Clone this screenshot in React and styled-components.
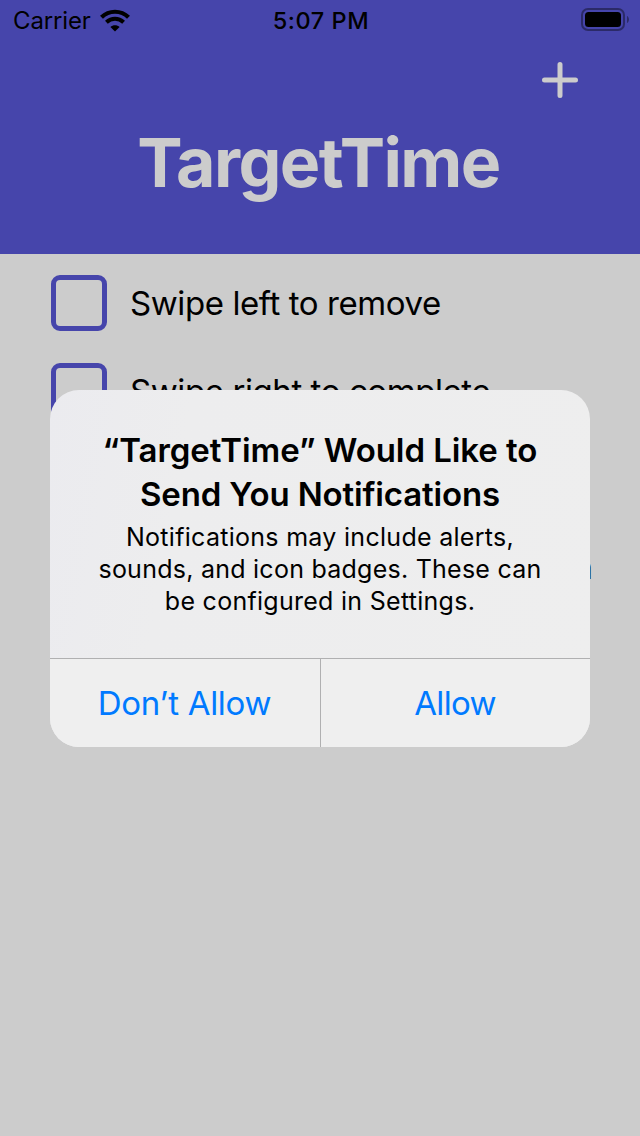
import React from "react";
import styled, { createGlobalStyle } from "styled-components";

const GlobalStyle = createGlobalStyle`
  * { box-sizing: border-box; }
  body {
    margin: 0;
    background: #cccccc;
    color: #000;
    font-family: Inter, "Liberation Sans", sans-serif;
  }
`;

const Screen = styled.div`
  position: relative;
  width: 640px;
  height: 1136px;
  overflow: hidden;
  background: #cccccc;
`;

const Header = styled.header`
  height: 254px;
  background: #4645ab;
  display: flex;
  flex-direction: column;
`;

const StatusBar = styled.div`
  height: 40px;
  display: grid;
  grid-template-columns: 1fr auto 1fr;
  grid-template-rows: 40px;
  align-items: center;
  padding: 0 11px 0 13px;
`;

const Carrier = styled.div`
  display: flex;
  align-items: center;
  gap: 9px;
  height: 40px;
  font-size: 24px;
  line-height: 38px;
  letter-spacing: -0.15px;
  padding-top: 2px;
`;

const WifiIcon = styled.svg`
  display: block;
  margin-bottom: 2px;
`;

const Clock = styled.div`
  height: 40px;
  font-size: 23.5px;
  font-weight: 500;
  line-height: 38px;
  letter-spacing: 0.55px;
  padding-top: 2px;
`;

const BatteryIcon = styled.svg`
  display: block;
  justify-self: end;
`;

const Toolbar = styled.div`
  height: 80px;
  display: flex;
  justify-content: flex-end;
  align-items: center;
  padding-right: 60px;
`;

const AddButton = styled.button`
  width: 40px;
  height: 40px;
  padding: 0;
  border: 0;
  background: none;
  svg { display: block; }
`;

const Title = styled.h1`
  margin: 0;
  padding-right: 3px;
  font-size: 68px;
  line-height: 84px;
  font-weight: 700;
  letter-spacing: -1.6px;
  text-align: center;
  color: #cccccc;
`;

const TaskList = styled.ul`
  list-style: none;
  margin: 0;
  padding: 5px 47.5px 0 51px;
`;

const TaskRow = styled.li`
  height: 88px;
  display: flex;
  align-items: center;
  gap: 23px;
`;

const Checkbox = styled.span`
  flex: none;
  width: 56px;
  height: 56px;
  border: 5px solid #4645ab;
  border-radius: 9px;
`;

const TaskLabel = styled.span`
  flex: 1;
  font-size: 33px;
  line-height: 44px;
  letter-spacing: -0.42px;
  text-align: ${(p) => p.$align || "left"};
  white-space: nowrap;
`;

const Alert = styled.section`
  position: absolute;
  left: 50px;
  top: 390px;
  width: 540px;
  height: 357px;
  border-radius: 29px;
  overflow: hidden;
  background: linear-gradient(100deg, #ebebef 0%, #ededee 24%, #eeeeee 100%);
  display: flex;
  flex-direction: column;
`;

const AlertBody = styled.div`
  height: 268px;
  padding-top: 38px;
  text-align: center;
`;

const AlertTitle = styled.h2`
  margin: 0;
  font-size: 33px;
  line-height: 44px;
  font-weight: 600;
`;

const AlertMessage = styled.p`
  margin: 5px 0 0;
  font-size: 25px;
  line-height: 32px;
`;

const Line = styled.span`
  display: block;
  white-space: nowrap;
  letter-spacing: ${(p) => p.$spacing || "0"};
`;

const AlertActions = styled.div`
  height: 89px;
  display: grid;
  grid-template-columns: 270px 270px;
  border-top: 1px solid #b0b0b1;
  background: #efefef;
`;

const AlertButton = styled.button`
  padding: 0 1px 0 0;
  border: 0;
  border-left: ${(p) => (p.$divided ? "1px solid #b0b0b1" : "0")};
  background: none;
  color: #007aff;
  font-family: inherit;
  font-size: 33px;
  line-height: 44px;
  letter-spacing: ${(p) => p.$spacing || "0"};
`;

function Wifi() {
  return (
    <WifiIcon width="30" height="23" viewBox="0 0 30 23" fill="none">
      <path d="M1.5 8.3C9 .9 21 .9 28.5 8.3" stroke="#000" strokeWidth="4.2" />
      <path d="M6.4 13.3C11.4 8.6 18.6 8.6 23.6 13.3" stroke="#000" strokeWidth="4" />
      <path d="M15 22.6 10.4 18C12.8 15.7 17.2 15.7 19.6 18Z" fill="#000" />
    </WifiIcon>
  );
}

function Battery() {
  return (
    <BatteryIcon width="49" height="24" viewBox="0 0 49 24">
      <rect x="2" y="1" width="42" height="21" rx="6" fill="none" stroke="#2b2a68" strokeWidth="2" />
      <rect x="5" y="4" width="36" height="15" rx="3.5" fill="#000" />
      <path d="M47 8C49.6 9.3 49.6 13.7 47 15Z" fill="#2b2a68" />
    </BatteryIcon>
  );
}

export default function App() {
  return (
    <Screen>
      <GlobalStyle />
      <Header>
        <StatusBar>
          <Carrier>
            <span>Carrier</span>
            <Wifi />
          </Carrier>
          <Clock>5:07 PM</Clock>
          <Battery />
        </StatusBar>
        <Toolbar>
          <AddButton aria-label="Add">
            <svg width="40" height="40" viewBox="0 0 40 40">
              <path d="M20 4.5V35.5M4.5 20H35.5" stroke="#cccccc" strokeWidth="5" strokeLinecap="round" />
            </svg>
          </AddButton>
        </Toolbar>
        <Title>TargetTime</Title>
      </Header>
      <TaskList>
        <TaskRow>
          <Checkbox />
          <TaskLabel>Swipe left to remove</TaskLabel>
        </TaskRow>
        <TaskRow>
          <Checkbox />
          <TaskLabel>Swipe right to complete</TaskLabel>
        </TaskRow>
        <TaskRow />
        <TaskRow>
          <Checkbox />
          <TaskLabel $align="right">n</TaskLabel>
        </TaskRow>
      </TaskList>
      <Alert role="alertdialog">
        <AlertBody>
          <AlertTitle>
            <Line $spacing="-0.06px">“TargetTime” Would Like to</Line>
            <Line $spacing="-0.15px">Send You Notifications</Line>
          </AlertTitle>
          <AlertMessage>
            <Line $spacing="0.29px">Notifications may include alerts,</Line>
            <Line $spacing="0.25px">sounds, and icon badges. These can</Line>
            <Line $spacing="0.28px">be configured in Settings.</Line>
          </AlertMessage>
        </AlertBody>
        <AlertActions>
          <AlertButton $spacing="-0.3px">Don’t Allow</AlertButton>
          <AlertButton $divided $spacing="-0.7px">Allow</AlertButton>
        </AlertActions>
      </Alert>
    </Screen>
  );
}
